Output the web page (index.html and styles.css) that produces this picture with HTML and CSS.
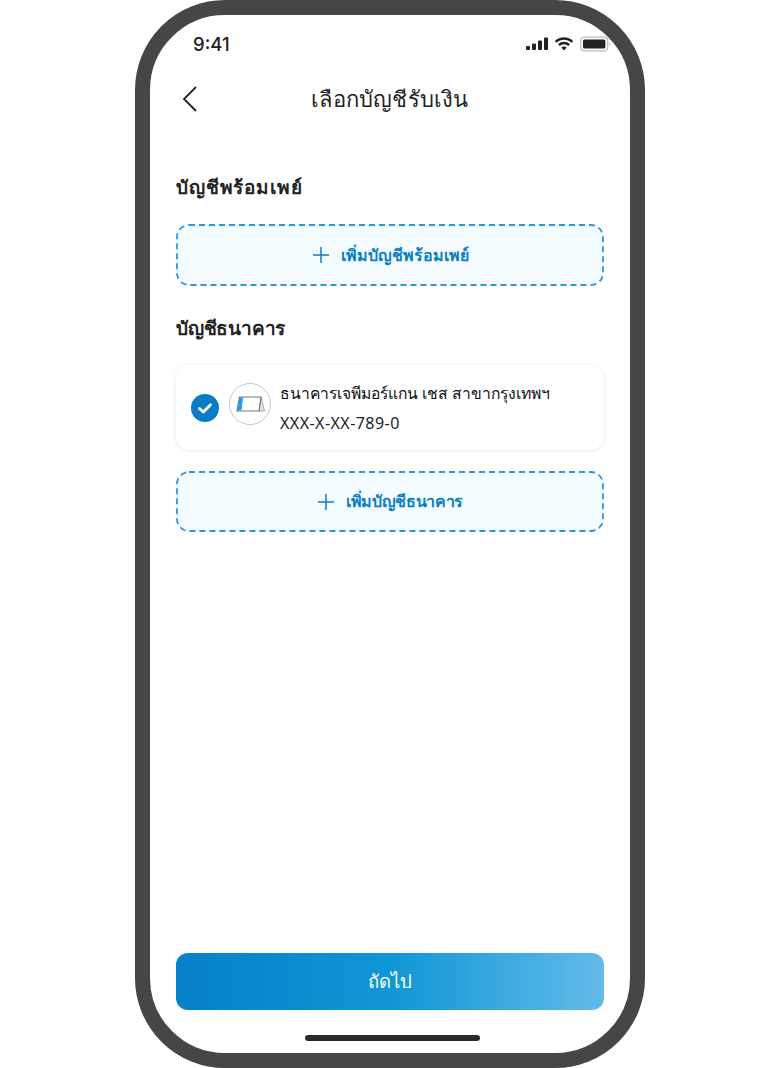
FILE: index.html
```html
<!DOCTYPE html>
<html lang="th">
<head>
    <meta charset="UTF-8">
    <meta name="viewport" content="width=device-width, initial-scale=1.0">
    <title>เลือกบัญชีรับเงิน</title>
    <link rel="stylesheet" href="styles.css">
</head>
<body>

<div class="phone">
    <div class="screen">

        <div class="status-bar">
            <span class="time">9:41</span>
            <div class="status-icons">
                <svg width="22" height="14" viewBox="0 0 22 14">
                    <rect x="0" y="9" width="4" height="4" rx="1" fill="#222"/>
                    <rect x="6" y="6.5" width="4" height="6.5" rx="1" fill="#222"/>
                    <rect x="12" y="3.5" width="4" height="9.5" rx="1" fill="#222"/>
                    <rect x="18" y="0.5" width="4" height="12.5" rx="1" fill="#222"/>
                </svg>
                <svg width="18" height="14" viewBox="0 0 18 14">
                    <path d="M0.8 5 C5.2 0.4 12.8 0.4 17.2 5" fill="none" stroke="#222" stroke-width="2.4"/>
                    <path d="M3.9 8 C6.8 5.4 11.2 5.4 14.1 8" fill="none" stroke="#222" stroke-width="2.4"/>
                    <path d="M6.4 10.4 L9 13.4 L11.6 10.4 C10 9.2 8 9.2 6.4 10.4 Z" fill="#222"/>
                </svg>
                <svg width="31" height="16" viewBox="0 0 31 16">
                    <rect x="0.7" y="1.2" width="27" height="13.6" rx="3.5" fill="none" stroke="#bbb" stroke-width="1.2"/>
                    <rect x="3" y="3.5" width="22.4" height="9" rx="1.5" fill="#222"/>
                    <path d="M29 6 C30.2 6.4 30.2 9.6 29 10 Z" fill="#bbb"/>
                </svg>
            </div>
        </div>

        <div class="nav-bar">
            <svg class="back" width="18" height="28" viewBox="0 0 18 28">
                <path d="M15 2 L3 14 L15 26" fill="none" stroke="#222" stroke-width="1.8"/>
            </svg>
            <h1>เลือกบัญชีรับเงิน</h1>
        </div>

        <div class="content">
            <h2 class="section-title promptpay-title">บัญชีพร้อมเพย์</h2>
            <div class="add-box add-promptpay">
                <svg class="dash-border"><rect rx="12" ry="12"/></svg>
                <svg width="18" height="18" viewBox="0 0 18 18">
                    <path d="M9 1 V17 M1 9 H17" stroke="#0a7fc4" stroke-width="1.5" fill="none"/>
                </svg>
                <span>เพิ่มบัญชีพร้อมเพย์</span>
            </div>

            <h2 class="section-title bank-title">บัญชีธนาคาร</h2>
            <div class="account-card">
                <div class="check">
                    <svg width="28" height="28" viewBox="0 0 28 28">
                        <circle cx="14" cy="14" r="14" fill="#0a7cc4"/>
                        <path d="M8.5 14.5 L12.3 18 L19.5 10.8" fill="none" stroke="#fff" stroke-width="2.8" stroke-linecap="round" stroke-linejoin="round"/>
                    </svg>
                </div>
                <div class="bank-logo">
                    <svg width="29" height="16" viewBox="0 0 29 16">
                        <path d="M25 1 L28.5 15 H23 Z" fill="#e6e6e6" stroke="#8a9299" stroke-width="0.8"/>
                        <path d="M3.5 1 H25 L23 15 H1 Z" fill="#fff" stroke="#6d7880" stroke-width="1.2"/>
                        <path d="M3.5 1.6 H7 L5.5 14.4 H1.6 Z" fill="#1fa0e8"/>
                    </svg>
                </div>
                <div class="account-info">
                    <div class="bank-name">ธนาคารเจพีมอร์แกน เชส สาขากรุงเทพฯ</div>
                    <div class="account-no">XXX-X-XX-789-0</div>
                </div>
            </div>
            <div class="add-box add-bank">
                <svg class="dash-border"><rect rx="12" ry="12"/></svg>
                <svg width="18" height="18" viewBox="0 0 18 18">
                    <path d="M9 1 V17 M1 9 H17" stroke="#0a7fc4" stroke-width="1.5" fill="none"/>
                </svg>
                <span>เพิ่มบัญชีธนาคาร</span>
            </div>
        </div>

        <div class="footer">
            <button class="next-btn">ถัดไป</button>
            <div class="home-bar"></div>
        </div>

    </div>
</div>

</body>
</html>
```

FILE: styles.css
```css
html, body {
    margin: 0;
    padding: 0;
    background-color: #fff;
}
body {
    width: 780px;
    height: 1068px;
    overflow: hidden;
    font-family: "Noto Sans", "Open Sans", sans-serif;
    color: #222;
}
.phone {
    box-sizing: border-box;
    width: 510px;
    height: 1068px;
    margin-left: 135px;
    border: 15px solid #464646;
    border-radius: 90px;
    background-color: #fff;
    overflow: hidden;
}
.screen {
    height: 100%;
    display: flex;
    flex-direction: column;
}

/* Statuszeile */
.status-bar {
    height: 56px;
    padding: 0 19px 0 43px;
    display: flex;
    align-items: center;
    justify-content: space-between;
    box-sizing: border-box;
}
.time {
    font-family: "Inter", sans-serif;
    font-size: 18.5px;
    font-weight: 500;
    margin-top: 2px;
}
.status-icons {
    display: flex;
    align-items: center;
    gap: 7px;
    margin-top: 2px;
}

/* Titel */
.nav-bar {
    height: 56px;
    position: relative;
    display: flex;
    align-items: center;
    justify-content: center;
}
.nav-bar h1 {
    margin: 0;
    font-size: 22px;
    font-weight: 400;
    letter-spacing: 0.2px;
}
.back {
    position: absolute;
    left: 31px;
    top: 14px;
}

.content {
    flex: 1;
    padding: 0 26px;
}
.section-title {
    margin: 0;
    font-size: 19px;
    line-height: 28px;
    font-weight: 600;
}
.promptpay-title {
    margin-top: 46px;
    letter-spacing: 0.85px;
}
.bank-title {
    margin-top: 28px;
    letter-spacing: -0.2px;
}

.add-box {
    box-sizing: border-box;
    position: relative;
    display: flex;
    align-items: center;
    justify-content: center;
    gap: 11px;
    border-radius: 12px;
    background-color: #f4fbff;
    color: #0a7fc4;
    font-size: 16px;
    font-weight: 600;
}
.dash-border {
    position: absolute;
    left: 0;
    top: 0;
    width: 100%;
    height: 100%;
}
.dash-border rect {
    x: 1px;
    y: 1px;
    width: calc(100% - 2px);
    height: calc(100% - 2px);
    fill: none;
    stroke: #2f97d6;
    stroke-width: 1.8;
    stroke-dasharray: 6 4;
}
.add-promptpay {
    height: 62px;
    margin-top: 23px;
}
.add-bank {
    height: 61px;
    margin-top: 21px;
    letter-spacing: -0.35px;
}

.account-card {
    box-sizing: border-box;
    height: 85px;
    margin-top: 23px;
    padding: 0 15px;
    display: flex;
    align-items: center;
    background-color: #fff;
    border-radius: 14px;
    box-shadow: 0 1px 4px rgba(0, 0, 0, 0.1);
}
.check {
    width: 28px;
    height: 28px;
}
.bank-logo {
    box-sizing: border-box;
    width: 42px;
    height: 42px;
    margin: 0 0 8px 10px;
    border: 1.5px solid #c8c8c8;
    border-radius: 50%;
    display: flex;
    align-items: center;
    justify-content: center;
}
.account-info {
    margin-left: 9px;
}
.bank-name {
    font-size: 15.7px;
    line-height: 24px;
    font-weight: 500;
    color: #111;
}
.account-no {
    font-size: 16px;
    line-height: 24px;
    margin-top: 6px;
    letter-spacing: 0.45px;
}

.footer {
    padding: 0 26px;
}
.next-btn {
    display: block;
    width: 100%;
    height: 57px;
    border: none;
    border-radius: 12px;
    background: linear-gradient(90deg, #0680c8 0%, #1096d6 50%, #62bbe9 100%);
    color: #fff;
    font-family: inherit;
    font-size: 18.5px;
}
.home-bar {
    width: 175px;
    height: 6px;
    margin: 25px 0 12px 129px;
    border-radius: 3px;
    background-color: #2a2a2a;
}
```
